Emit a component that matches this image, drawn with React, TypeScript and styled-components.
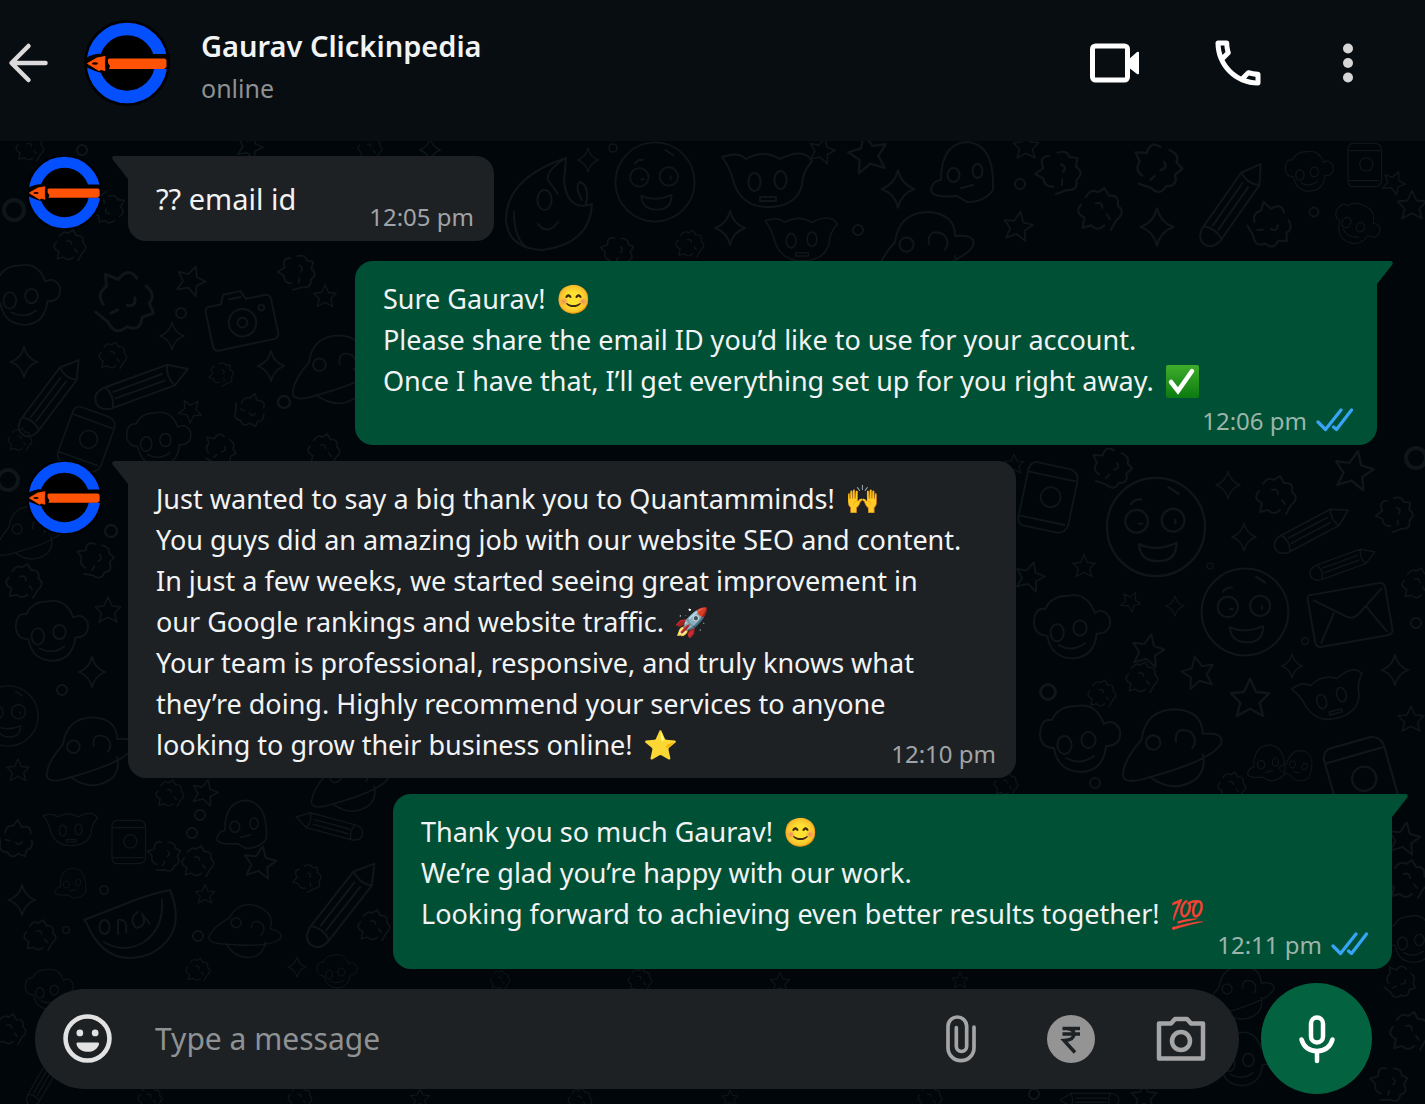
import React from "react";
import styled, { createGlobalStyle, css } from "styled-components";

const GlobalStyle = createGlobalStyle`
  *, *::before, *::after { box-sizing: border-box; }
  body {
    margin: 0;
    background: #01060a;
    color: #f2f3f4;
    font-family: "Noto Sans", "Open Sans", sans-serif;
  }
  button { padding: 0; border: 0; background: none; color: inherit; cursor: pointer; font: inherit; }
`;

const Page = styled.div`
  position: relative;
  display: flex;
  flex-direction: column;
  min-height: 100vh;
  overflow: hidden;
`;

const Wallpaper = styled.svg`
  position: absolute;
  inset: 0;
  width: 100%;
  height: 100%;
  z-index: -1;
  fill: none;
  stroke: #0f1619;
  stroke-width: 2;
  stroke-linecap: round;
  stroke-linejoin: round;
`;

const Header = styled.header`
  display: flex;
  align-items: flex-start;
  height: 141px;
  padding: 20px 65px 0 8px;
  background: #070d10;
`;

const IconButton = styled.button<{ $width: number; $height?: number }>`
  display: flex;
  align-items: center;
  justify-content: center;
  flex: none;
  width: ${(p) => p.$width}px;
  height: ${(p) => p.$height ?? 86}px;
`;

const AvatarSvg = styled.svg`
  display: block;
  flex: none;
`;

const HeaderAvatar = styled.div`
  flex: none;
  margin-left: 34px;
`;

const Contact = styled.div`
  flex: 1;
  min-width: 0;
  margin-left: 31px;
  padding-top: 4px;
`;

const ContactName = styled.h1`
  margin: 0;
  font-size: 29px;
  font-weight: 600;
  line-height: 44px;
  white-space: nowrap;
`;

const Presence = styled.p`
  margin: 0;
  font-size: 25px;
  line-height: 40px;
  color: #8d9193;
`;

const HeaderActions = styled.div`
  display: flex;
  align-items: center;
  gap: 68px;
`;

const Messages = styled.main`
  flex: 1;
  padding-top: 15px;
`;

const Row = styled.article<{ $side: "in" | "out"; $edge?: number; $after?: number }>`
  display: flex;
  align-items: flex-start;
  justify-content: ${(p) => (p.$side === "out" ? "flex-end" : "flex-start")};
  gap: 27px;
  padding-left: 28px;
  padding-right: ${(p) => p.$edge ?? 48}px;
  margin-bottom: ${(p) => p.$after ?? 16}px;
`;

const Bubble = styled.div<{ $side: "in" | "out"; $width: number; $inline?: boolean }>`
  position: relative;
  display: flex;
  flex-direction: ${(p) => (p.$inline ? "row" : "column")};
  width: ${(p) => p.$width}px;
  max-width: 100%;
  padding: ${(p) => (p.$inline ? "0" : "17px")} 20px 7px 28px;
  background: ${(p) => (p.$side === "out" ? "#005036" : "#1d2124")};
  border-radius: ${(p) => (p.$side === "out" ? "18px 0 18px 18px" : "0 18px 18px 18px")};
  ${(p) => p.$inline && css`min-height: 85px; justify-content: space-between;`}
  ${(p) => p.$side === "out" && css`padding-right: 24px;`}
`;

const TailSvg = styled.svg<{ $side: "in" | "out" }>`
  position: absolute;
  top: 0;
  ${(p) => (p.$side === "out" ? "left: 100%; margin-left: -1px;" : "right: 100%; margin-right: -1px; transform: scaleX(-1);")}
  fill: ${(p) => (p.$side === "out" ? "#005036" : "#1d2124")};
`;

const Text = styled.p<{ $inline?: boolean }>`
  margin: 0;
  font-size: 27px;
  line-height: 41px;
  ${(p) => p.$inline && css`padding-top: 22px; font-size: 29px;`}
`;

const Emoji = styled.span`
  margin-left: 3px;
  font-size: 28px;
  line-height: 1;
`;

const CheckSvg = styled.svg`
  margin-left: 5px;
  vertical-align: -7px;
`;

const Meta = styled.footer<{ $lift?: number; $side: "in" | "out" }>`
  display: flex;
  align-items: center;
  align-self: flex-end;
  gap: 9px;
  margin-top: ${(p) => p.$lift ?? 0}px;
  font-size: 24px;
  line-height: 34px;
  color: ${(p) => (p.$side === "out" ? "#9db4a9" : "#a1a4a6")};
`;

const Composer = styled.form`
  display: flex;
  align-items: center;
  gap: 22px;
  padding: 0 53px 10px 35px;
`;

const InputPill = styled.div`
  display: flex;
  align-items: center;
  flex: 1;
  min-width: 0;
  height: 100px;
  padding: 0 33px 0 28px;
  border-radius: 50px;
  background: #1d2124;
`;

const MessageInput = styled.input`
  flex: 1;
  min-width: 0;
  margin-left: 43px;
  padding: 0;
  border: 0;
  outline: 0;
  background: none;
  color: #f2f3f4;
  font: 30px/40px "Noto Sans", "Open Sans", sans-serif;
  &::placeholder { color: #8f9294; opacity: 1; }
`;

const PillActions = styled.div`
  display: flex;
  align-items: center;
  gap: 60px;
`;

const MicButton = styled.button`
  display: flex;
  align-items: center;
  justify-content: center;
  flex: none;
  width: 111px;
  height: 111px;
  border-radius: 50%;
  background: #03623f;
`;

const Avatar = ({ size, crop = 0 }: { size: number; crop?: number }) => (
  <AvatarSvg width={size} height={size} viewBox={`${crop} ${crop} ${86 - 2 * crop} ${86 - 2 * crop}`} role="img" aria-label="Gaurav Clickinpedia">
    <circle cx="43" cy="43" r="43" fill="#000" />
    <circle cx="43" cy="43" r="34" fill="none" stroke="#0450fe" strokeWidth="12.500" />
    <path d="M2 44V38Q11 33 18 34H86V49H25L20 53Q14 53 2 47Z" fill="#000" />
    <path d="M3.500 43.500L13 38L21 36.500L20.500 44L21 50.500L17 49.500L15 50.500Z" fill="#fe5206" stroke="#fe5206" strokeLinejoin="round" />
    <path d="M24 39L26 38.500H80Q82.500 38.500 82.500 41V47L80 49H25L26 46L24 43Z" fill="#fe5206" />
    <ellipse cx="11" cy="43.500" rx="3" ry="1.200" fill="#200" />
  </AvatarSvg>
);

const Tail = ({ side }: { side: "in" | "out" }) => (
  <TailSvg $side={side} width="17" height="24" viewBox="0 0 17 24" aria-hidden="true">
    <path d="M0 0H15Q18 1 16 4L1 23H0Z" />
  </TailSvg>
);

const Ticks = () => (
  <svg width="37" height="26" viewBox="0 0 37 26" fill="none" stroke="#36a5f5" strokeWidth="3.200" strokeLinecap="round" strokeLinejoin="round" role="img" aria-label="Read">
    <path d="M2 14L9.500 21.500L25 2M17.500 19L20.500 21.500L35.500 2" />
  </svg>
);

const CheckMark = () => (
  <CheckSvg width="33" height="33" viewBox="0 0 33 33" role="img" aria-label="Done">
    <defs>
      <linearGradient id="check-fill" x1="0" y1="0" x2="0" y2="1">
        <stop offset="0" stopColor="#3fae2c" />
        <stop offset="1" stopColor="#0b7a10" />
      </linearGradient>
    </defs>
    <rect width="33" height="33" rx="2" fill="url(#check-fill)" />
    <path d="M5 17L12 26L26 6" fill="none" stroke="#fff" strokeWidth="4.500" strokeLinecap="round" />
  </CheckSvg>
);

const PencilDoodle = () => <path d="M-50 0L-32-11H36Q48-9 48 0T36 11H-32ZM-32-11Q-26 0-32 11M-24-3H28M-24 4H28M34-11Q28 0 34 11" />;
const StarDoodle = () => <path d="M0-16L5-5L16-4L8 4L11 15L0 9L-11 15L-8 4L-16-4L-5-5Z" />;
const SparkDoodle = () => <path d="M0-17Q3-4 15 0Q3 4 0 17Q-3 4-15 0Q-3-4 0-17Z" />;
const FaceDoodle = () => (
  <>
    <circle r="43" />
    <circle cx="-17" cy="-5" r="10" />
    <circle cx="15" cy="-6" r="10" />
    <path d="M-15 15Q0 22 18 14Q18 30 2 30T-15 15ZM-22-20Q-18-25-13-24M11-35L20-29M-15-3H-12M17-6V-3" />
  </>
);
const BlobDoodle = () => <path d="M-13-12Q-8-20-2-16L4-20L8-13Q18-14 16-4Q24 2 15 9L10 18M4 14Q-2 20-8 14L-16 16L-14 7Q-24 2-17-5M-4-6Q2-8 2-2M6 4L9 8" />;
const DropDoodle = () => <path d="M16-46Q-44-26-44 16Q-42 44-8 46Q40 40 42 0Q18 8 14-22ZM16-46Q-4-34-2-24L8-10M-36 8Q-36 36-22 44M-12 20Q-2 32 8 18M-6-14A7 10 0 1 0-5-14M32-4Q24-18 30-22Q40-18 36 0" />;
const PlanetDoodle = () => <path d="M-30-4Q-26-34 4-34Q30-32 30-10Q52-12 48 0Q38 16-20 32Q-50 42-48 28T-30-4ZM-22 32Q2 50 24 34Q34 24 30 10M-14 4A7 7 0 1 1-13 3M4-2Q2-18 18-12Q26-4 20 4" />;
const CameraDoodle = () => <path d="M-30-18H-17L-13-27H5L9-18H28Q34-18 34-12V22Q34 28 28 28H-28Q-34 28-34 22V-12Q-34-18-30-18ZM0-9A14 14 0 1 0 1-9M0 0A5 5 0 1 0 1 0M-8-21H4M22-9A3 3 0 1 0 23-9" />;
const MailDoodle = () => <path d="M-38-26H34Q40-26 40-20V22Q40 28 34 28H-34Q-40 28-40 22V-20Q-40-26-38-26ZM-34-20L-4 2Q2 6 8 2L36-20M-34 24L-16-4M34 24L18-4" />;
const MugDoodle = () => <path d="M-26-20Q-38-22-38-4Q-36 8-24 8Q-20 32 4 32Q26 30 28 6Q44 6 42-10Q36-22 26-16Q18-38-2-34Q-20-34-26-20ZM-14-4A7 9 0 1 0-13-4M10-8A7 8 0 1 0 11-8M-12 18Q2 26 16 16" />;
const CrownDoodle = () => <path d="M-46-24Q-30-30-22-22Q-4-32 12-22Q36-34 44-20Q34-8 34 4Q28 26 0 26Q-26 26-34 2Q-38-14-46-24ZM-14-8A6 9 0 1 0-13-8M12-10A6 9 0 1 0 13-10M-8 16H8V20H-8Z" />;
const GhostDoodle = () => <path d="M-24 6Q-24-32 4-32Q30-28 28 16Q20 28 2 28L-8 22Q-34 24-34 16Q-32 6-24 6ZM-12-6A6 7 0 1 0-11-6M12-10A5 7 0 1 0 13-10M-4 14L8 11" />;
const MelonDoodle = () => <path d="M-46-6Q-20-16 0-24Q20-32 40-36Q58 8 20 28Q-24 44-44-4ZM-26 16Q-6 28 14 16Q34 2 32-26M-26-6A5 7 0 1 0-25-6M-12 8V-6Q-2-8-4 6M8-14Q-2-8 6 2Q18 0 12-12L20-2" />;
const CardsDoodle = () => <path d="M-22-36H16Q26-34 26-24V26Q24 36 14 36H-24Q-30 34-30 26V-28Q-28-36-22-36ZM-30-24H24M-28 26H22M0-12A11 11 0 1 0 1-12" />;
const DotDoodle = () => <circle r="5" />;

const doodles = {
  pencil: PencilDoodle, star: StarDoodle, spark: SparkDoodle, face: FaceDoodle, blob: BlobDoodle, drop: DropDoodle,
  planet: PlanetDoodle, camera: CameraDoodle, mail: MailDoodle, mug: MugDoodle, crown: CrownDoodle,
  ghost: GhostDoodle, melon: MelonDoodle, cards: CardsDoodle, dot: DotDoodle,
};

type Doodle = [keyof typeof doodles, number, number, number?, number?];

const wallpaperItems: Doodle[] = [
  ["blob", 30, 148, 0.7], ["dot", 82, 150], ["star", 250, 146, 0.8, 20], ["blob", 370, 148, 0.6], ["spark", 430, 150, 0.7],
  ["drop", 550, 204], ["dot", 613, 148, 0.8], ["spark", 588, 160, 0.7], ["face", 655, 182, 0.92], ["crown", 768, 181],
  ["star", 822, 150, 0.8, 15], ["star", 868, 153, 1.2, -12], ["spark", 898, 189, 1.1], ["ghost", 965, 174], ["dot", 1020, 184], ["star", 1026, 146, 0.8],
  ["blob", 1060, 172, 1.1, 40], ["blob", 1100, 210, 1.1], ["blob", 1158, 168, 1.2, 80], ["pencil", 1232, 205, 1, 125], ["mug", 1308, 172, 0.6],
  ["cards", 1366, 165, 0.6], ["star", 1394, 182, 0.7, 25], ["spark", 1157, 227, 1.1], ["blob", 1270, 226, 1.1, 120], ["dot", 1314, 212, 0.9],
  ["mug", 1355, 224, 0.6, 30], ["spark", 730, 228, 1], ["crown", 802, 240, 0.8], ["dot", 858, 230], ["planet", 925, 246], ["star", 1018, 226, 0.9, 10],
  ["star", 1412, 205, 0.9], ["blob", 618, 252, 0.8, 60], ["blob", 690, 244, 0.7],
  ["dot", 14, 210, 2], ["star", 40, 200, 0.7], ["blob", 108, 208, 0.8, 200], ["blob", 70, 246, 0.8], ["mug", 22, 296, 0.9], ["blob", 125, 302, 1.5, 100],
  ["star", 191, 280, 0.9, 20], ["dot", 181, 313], ["camera", 241, 318, 0.98, -12], ["blob", 298, 272, 0.9, 45], ["star", 325, 296, 0.7], ["spark", 172, 336, 0.8],
  ["pencil", 50, 398, 0.95, 127], ["pencil", 141, 386, 1, 160], ["blob", 113, 356, 0.7], ["blob", 222, 374, 0.6, 30], ["spark", 271, 366, 0.9],
  ["planet", 336, 366, 0.9], ["star", 191, 410, 0.7, 40], ["blob", 250, 411, 0.8, 150], ["dot", 284, 402, 1.2], ["cards", 88, 440, 0.8, 20], ["mug", 157, 440, 0.8],
  ["blob", 220, 450, 0.8, 90], ["blob", 324, 450, 0.8], ["blob", 20, 440, 0.6], ["spark", 24, 362, 0.9], ["dot", 8, 480, 2],
  ["planet", 30, 530, 0.7], ["dot", 111, 531, 1.2], ["blob", 96, 560, 0.9, 70], ["mug", 50, 632, 0.9], ["star", 108, 610, 0.8], ["spark", 92, 672, 0.9],
  ["blob", 24, 582, 0.9], ["face", 8, 716, 0.7], ["planet", 90, 748, 0.9], ["dot", 62, 690], ["star", 18, 770, 0.7],
  ["cards", 1050, 498, 0.9, 12], ["star", 1014, 464, 0.6], ["blob", 1112, 468, 1, 80], ["face", 1156, 527, 1.14], ["spark", 1228, 485, 0.8],
  ["spark", 1244, 537, 0.8], ["blob", 1276, 496, 1], ["star", 1354, 470, 1.2, 12], ["dot", 1416, 458, 2], ["pencil", 1311, 530, 0.84, 152],
  ["pencil", 1342, 564, 0.7, 160], ["blob", 1396, 514, 0.9, 40], ["star", 1030, 576, 0.9, 15], ["star", 1084, 566, 0.7], ["mug", 1070, 628, 0.95],
  ["star", 1131, 601, 0.6, 30], ["spark", 1175, 606, 0.6], ["face", 1245, 612, 1.01], ["mail", 1350, 614, 0.98, -10], ["blob", 1418, 584, 0.8],
  ["star", 1148, 650, 1, 12], ["blob", 1142, 678, 0.8], ["star", 1198, 672, 1, -12], ["star", 1250, 698, 1.2], ["spark", 1292, 666, 0.7], ["spark", 1395, 670, 0.9],
  ["crown", 1332, 698, 0.8, -15], ["mug", 1078, 740, 1], ["dot", 1048, 692, 1.5], ["blob", 1102, 694, 0.7], ["planet", 1172, 744, 1.02], ["star", 1411, 719, 0.8],
  ["ghost", 1268, 764, 0.6], ["ghost", 1298, 766, 0.5, 20], ["cards", 1364, 780, 1.1, -16], ["dot", 1305, 641, 0.7], ["dot", 1416, 623],
  ["dot", 1210, 566, 0.6], ["blob", 1232, 786, 0.7], ["blob", 1006, 784, 0.6], ["dot", 1095, 783],
  ["crown", 71, 830, 0.6], ["ghost", 72, 884, 0.5], ["cards", 130, 842, 0.6], ["blob", 165, 856, 0.8, 60], ["dot", 192, 833], ["dot", 200, 815],
  ["blob", 198, 862, 0.8], ["ghost", 244, 826, 0.8], ["star", 260, 862, 1, 10], ["pencil", 330, 826, 0.7, 15], ["pencil", 342, 905, 1.05, 128],
  ["blob", 308, 878, 0.7, 30], ["melon", 130, 926, 1], ["planet", 248, 928, 0.7, 20], ["dot", 104, 890, 0.8], ["star", 205, 894, 0.6], ["blob", 374, 926, 0.8],
  ["spark", 22, 900, 0.9], ["blob", 40, 936, 0.8], ["spark", 297, 967, 0.6], ["mug", 336, 972, 0.5], ["dot", 198, 936], ["mug", 48, 990, 0.6],
  ["blob", 10, 1030, 0.8], ["pencil", 44, 1080, 0.6, 120], ["blob", 198, 970, 0.6], ["star", 205, 792, 0.8, 15], ["planet", 350, 778, 0.8], ["blob", 170, 794, 0.7],
  ["blob", 16, 840, 0.9, 140], ["dot", 66, 930, 0.7], ["star", 1404, 838, 1, 10], ["mug", 1412, 940, 0.7], ["blob", 1408, 880, 1], ["planet", 1240, 990, 0.7],
  ["blob", 1410, 1032, 1], ["blob", 1390, 1084, 0.9, 60], ["blob", 1400, 982, 0.8, 100], ["mug", 1240, 1060, 0.8], ["blob", 930, 1098, 0.6], ["dot", 1034, 1094],
  ["pencil", 1090, 1100, 0.6], ["star", 1144, 1096, 0.8], ["blob", 640, 980, 0.6], ["star", 780, 982, 0.6], ["blob", 500, 980, 0.5], ["star", 960, 980, 0.5],
  ["blob", 300, 1098, 0.6], ["star", 420, 1098, 0.6], ["blob", 580, 1100, 0.6], ["star", 730, 1098, 0.5], ["blob", 150, 1098, 0.6],
];

const Background = () => (
  <Wallpaper viewBox="0 0 1425 1104" preserveAspectRatio="xMinYMin slice" aria-hidden="true">
    {wallpaperItems.map(([kind, x, y, scale = 1, turn = 0], i) => {
      const Shape = doodles[kind];
      return (
        <g key={i} transform={`translate(${x} ${y}) rotate(${turn}) scale(${scale})`}>
          <Shape />
        </g>
      );
    })}
  </Wallpaper>
);

export default function App() {
  return (
    <Page>
      <GlobalStyle />
      <Background />
      <Header>
        <IconButton $width={42} aria-label="Back">
          <svg width="42" height="42" viewBox="0 0 42 42" fill="none" stroke="#dcdadb" strokeWidth="4.500" strokeLinecap="round" strokeLinejoin="round">
            <path d="M37.500 21H4M20.500 4L3.500 21L20.500 38" />
          </svg>
        </IconButton>
        <HeaderAvatar><Avatar size={86} /></HeaderAvatar>
        <Contact>
          <ContactName>Gaurav Clickinpedia</ContactName>
          <Presence>online</Presence>
        </Contact>
        <HeaderActions>
          <IconButton $width={50} aria-label="Video call">
            <svg width="50" height="40" viewBox="0 0 50 40">
              <rect x="2.500" y="3" width="35" height="34" rx="3" fill="none" stroke="#fff" strokeWidth="5" />
              <path d="M38 17L47 9Q49 8 49 10V30Q49 32 47 31L38 24Z" fill="#fff" />
            </svg>
          </IconButton>
          <IconButton $width={60} aria-label="Voice call">
            <svg width="60" height="60" viewBox="0 0 24 24" fill="#fff">
              <path d="M6.540 5c.06.890.210 1.760.450 2.590l-1.200 1.200c-.410-1.200-.670-2.470-.760-3.790h1.510m9.860 12.020c.850.240 1.720.390 2.600.450v1.490c-1.320-.090-2.590-.350-3.800-.750l1.200-1.190M7.500 3H4c-.550 0-1 .450-1 1 0 9.390 7.610 17 17 17 .550 0 1-.450 1-1v-3.490c0-.550-.450-1-1-1-1.240 0-2.450-.200-3.570-.570-.100-.040-.210-.050-.310-.050-.260 0-.510.100-.710.290l-2.200 2.200c-2.830-1.450-5.150-3.760-6.590-6.590l2.200-2.200c.280-.280.360-.670.250-1.020C8.700 6.450 8.500 5.250 8.500 4c0-.550-.450-1-1-1z" />
            </svg>
          </IconButton>
          <IconButton $width={24} aria-label="More options">
            <svg width="12" height="40" viewBox="0 0 12 40" fill="#d6d6d6">
              <circle cx="6" cy="5.500" r="5" /><circle cx="6" cy="20" r="5" /><circle cx="6" cy="34.500" r="5" />
            </svg>
          </IconButton>
        </HeaderActions>
      </Header>

      <Messages>
        <Row $side="in" $after={20}>
          <Avatar size={73} crop={2} />
          <Bubble $side="in" $width={366} $inline>
            <Tail side="in" />
            <Text $inline>?? email id</Text>
            <Meta $side="in"><time>12:05 pm</time></Meta>
          </Bubble>
        </Row>
        <Row $side="out">
          <Bubble $side="out" $width={1022}>
            <Tail side="out" />
            <Text>
              Sure Gaurav! <Emoji>😊</Emoji><br />
              Please share the email ID you’d like to use for your account.<br />
              Once I have that, I’ll get everything set up for you right away. <CheckMark />
            </Text>
            <Meta $side="out" $lift={3}><time>12:06 pm</time><Ticks /></Meta>
          </Bubble>
        </Row>
        <Row $side="in">
          <Avatar size={73} crop={2} />
          <Bubble $side="in" $width={888}>
            <Tail side="in" />
            <Text>
              Just wanted to say a big thank you to Quantamminds! <Emoji>🙌</Emoji><br />
              You guys did an amazing job with our website SEO and content.<br />
              In just a few weeks, we started seeing great improvement in<br />
              our Google rankings and website traffic. <Emoji>🚀</Emoji><br />
              Your team is professional, responsive, and truly knows what<br />
              they’re doing. Highly recommend your services to anyone<br />
              looking to grow their business online! <Emoji>⭐</Emoji>
            </Text>
            <Meta $side="in" $lift={-28}><time>12:10 pm</time></Meta>
          </Bubble>
        </Row>
        <Row $side="out" $edge={33} $after={13}>
          <Bubble $side="out" $width={999}>
            <Tail side="out" />
            <Text>
              Thank you so much Gaurav! <Emoji>😊</Emoji><br />
              We’re glad you’re happy with our work.<br />
              Looking forward to achieving even better results together! <Emoji>💯</Emoji>
            </Text>
            <Meta $side="out" $lift={-6}><time>12:11 pm</time><Ticks /></Meta>
          </Bubble>
        </Row>
      </Messages>

      <Composer onSubmit={(e) => e.preventDefault()}>
        <InputPill>
          <IconButton type="button" $width={49} $height={49} aria-label="Emoji">
            <svg width="49" height="49" viewBox="0 0 48 48">
              <circle cx="24" cy="24" r="21.500" fill="none" stroke="#e2e2e2" strokeWidth="4.500" />
              <circle cx="16.500" cy="18.500" r="3.300" fill="#e2e2e2" /><circle cx="31.500" cy="18.500" r="3.300" fill="#e2e2e2" />
              <path d="M14 28H34.500Q36 28.500 35 30.500C33 35 29 37 24.500 37S15 35 13.500 30.500Q12.500 28.500 14 28Z" fill="#e2e2e2" />
            </svg>
          </IconButton>
          <MessageInput placeholder="Type a message" aria-label="Type a message" />
          <PillActions>
            <IconButton type="button" $width={50} $height={50} aria-label="Attach">
              <svg width="30" height="48" viewBox="0 0 90 144" fill="none" stroke="#a5a5a6" strokeWidth="11" strokeLinecap="round">
                <path d="M84 36V98A39 39 0 0 1 6 98V34A28 28 0 0 1 62 34V94A15.500 15.500 0 0 1 31 94V38" />
              </svg>
            </IconButton>
            <IconButton type="button" $width={50} $height={50} aria-label="Payment">
              <svg width="48" height="48" viewBox="0 0 48 48">
                <circle cx="24" cy="24" r="24" fill="#949495" />
                <path d="M15.500 13.500H33M15.500 19H33M17 13.500H20Q27 14 27 19Q27 25 17 25.500L28 37.500" fill="none" stroke="#1d2124" strokeWidth="3.400" />
              </svg>
            </IconButton>
            <IconButton type="button" $width={50} $height={50} aria-label="Camera">
              <svg width="50" height="46" viewBox="0 0 50 46" fill="none" stroke="#a5a5a6" strokeWidth="4.500" strokeLinejoin="round">
                <path d="M3 7.500H15L19 3H31L35 7.500H47V42.500H3Z" />
                <circle cx="25" cy="25" r="9" />
              </svg>
            </IconButton>
          </PillActions>
        </InputPill>
        <MicButton type="button" aria-label="Record voice message">
          <svg width="38" height="50" viewBox="0 0 38 50" fill="none" stroke="#fff" strokeWidth="4.500" strokeLinecap="round">
            <rect x="13" y="3.500" width="12" height="25" rx="6" />
            <path d="M3.500 25.500C6 34 12 37 19 37S32 34 34.500 25.500M19 37V47" />
          </svg>
        </MicButton>
      </Composer>
    </Page>
  );
}
